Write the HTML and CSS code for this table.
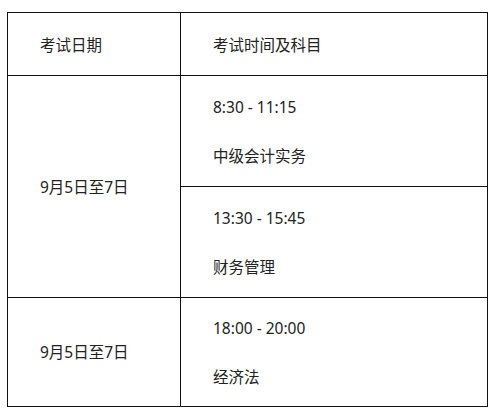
FILE: index.html
```html
<!DOCTYPE html>
<html lang="zh-CN">
<head>
<meta charset="utf-8">
<title>考试安排</title>
<link rel="stylesheet" href="styles.css">
</head>
<body>
<div class="schedule">
  <div class="cell head">考试日期</div>
  <div class="cell head">考试时间及科目</div>
  <div class="cell date span2">9月5日至7日</div>
  <div class="cell slot"><p>8:30 - 11:15</p><p>中级会计实务</p></div>
  <div class="cell slot"><p>13:30 - 15:45</p><p>财务管理</p></div>
  <div class="cell date last">9月5日至7日</div>
  <div class="cell slot last"><p>18:00 - 20:00</p><p>经济法</p></div>
</div>
</body>
</html>
```

FILE: styles.css
```css
html, body {
  margin: 0;
  padding: 0;
  background: #fff;
}
body {
  padding: 12px 0 0 7px;
  font-family: "Noto Sans", "Noto Sans CJK SC", sans-serif;
  font-size: 15.5px;
  line-height: 22px;
  color: #222;
}
.schedule {
  display: grid;
  grid-template-columns: 173px 307px;
  grid-template-rows: 63px 111px 111px 109px;
  width: max-content;
  border-left: 1px solid #111;
  border-top: 1px solid #111;
}
.cell {
  box-sizing: border-box;
  border-right: 1px solid #111;
  border-bottom: 1px solid #111;
  padding-left: 32px;
}
.head {
  padding-top: 21px;
}
.date {
  display: flex;
  align-items: center;
}
.span2 {
  grid-row: span 2;
}
.slot {
  display: flex;
  flex-direction: column;
  gap: 27px;
  padding-top: 20px;
}
.slot.last {
  padding-top: 19px;
}
.slot p {
  margin: 0;
}
```
